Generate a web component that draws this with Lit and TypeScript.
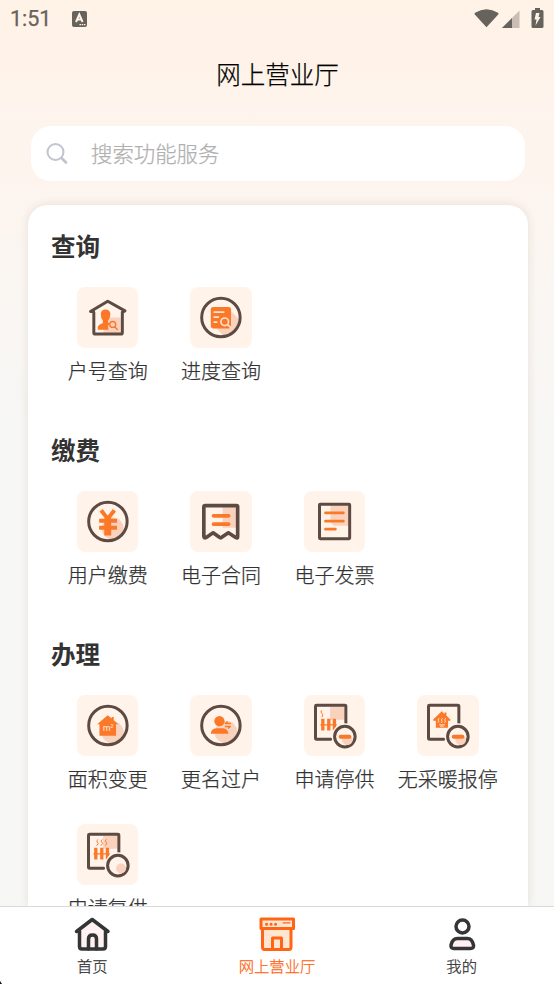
import { LitElement, html, css, svg } from "lit";
import { customElement, property } from "lit/decorators.js";

const ring = svg`<circle class="line" cx="92.5" cy="92" r="58"/>`;
const glow = svg`<circle class="shade" cx="107" cy="113" r="33"/>`;
const sheet = svg`<path class="line" d="M125.500 88V34Q125.500 31 122 31H37Q34 31 34 34V130Q34 133.500 37 133.500H80"/>`;
const badge = svg`<circle class="paper" cx="122.500" cy="125.500" r="40"/><circle class="line" cx="122.500" cy="125.500" r="31"/>`;
const minus = svg`<path class="hot" stroke-width="12" d="M110 126H136"/>`;
const radiator = svg`<path class="hot square" stroke-width="10" d="M56 72V107M74 72V107M91 72V107"/><path class="hot" stroke-width="4" d="M50 90H97"/>`;

const glyphs: Record<string, unknown> = {
  account: svg`<path class="shade" d="M79 92H131V139H79Z"/>
    <path class="line" d="M49 74H40L92 43L144 72L136 76V138Q136 142 132 142H54Q50 142 50 138V77"/>
    <path class="fill" d="M62 129V121Q63 114 77 109V101Q71 94 71 82Q72 68 85 68Q99 68 100 82Q99 95 93 101V108L98 110Q89 119 95 129Z"/>
    <circle class="hot" stroke-width="4" cx="107" cy="113" r="9"/><path class="hot" stroke-width="4" d="M113 120L121 128"/>`,
  progress: svg`<path class="shade" d="M122 72L147 97Q142 140 99 146L78 124Z"/>${ring}
    <rect class="fill" x="62" y="60" width="61" height="65" rx="7"/>
    <path class="pale" d="M72 76H101M72 91H85M72 106H80"/>
    <circle class="pale fillhot" cx="104" cy="105" r="11.500"/><path class="pale" d="M113 114L121 121"/>`,
  pay: svg`${glow}${ring}<path class="hot square" stroke-width="12" d="M72 58L92 84L112 58"/>
    <path class="hot square" stroke-width="12" d="M66 90H120M66 111H120"/><path class="hot square" stroke-width="21" d="M92 82V134"/>`,
  contract: svg`<path class="shade" d="M98 46H140V111H98Z"/>
    <path class="line heavy" d="M41 136V48Q41 44 46 44H139Q143 44 143 48V138Q143 144 137 140L115 126L96 139Q92 143 87 139L69 126L48 140Q41 144 41 136Z"/>
    <path class="hot" stroke-width="11" d="M70 75H116M70 100H116"/>`,
  invoice: svg`<path class="shade" d="M79 43H135V105H90L79 94Z"/><rect class="line" x="46" y="40" width="91" height="104" rx="2"/>
    <path class="hot" stroke-width="8" d="M64 66H118M64 91H118M64 115H94"/>`,
  area: svg`${glow}${ring}<path class="fill" d="M60 88L92 61L104 71V66H110V76L124 88H117V123H67V88Z"/>
    <text class="unit" x="77" y="109">m²</text>`,
  rename: svg`<circle class="shade" cx="108" cy="112" r="34"/>${ring}<circle class="fill" cx="88" cy="79" r="15.500"/>
    <path class="fill" d="M62 117Q62 102 79 100H98Q115 102 115 117Z"/>
    <path class="hot" stroke-width="4" d="M106 86H121M112 81L106 86M106 95H121L115 100"/>`,
  stop: svg`<path class="shade" d="M78 35H121V75H78Z"/>${sheet}${radiator}
    <path class="hot" stroke-width="3" d="M52 47Q47 52 53 55T54 66"/>${badge}<circle class="shade" cx="130" cy="135" r="16"/>${minus}`,
  noheat: svg`${sheet}<path class="fill" d="M48 74L74 49L82 57V53H88V62L100 74V78H93V99H56V78H48Z"/>
    <path class="pale thin" d="M65 71Q61 76 64 78T63 83M75 71Q71 76 74 78T73 83M85 71Q81 76 84 78T83 83M67 90H82M70 94H79"/>
    ${badge}<circle class="shade" cx="131" cy="135" r="16"/>${minus}`,
  restore: svg`<path class="shade" d="M78 35H121V75H78Z"/>${sheet}${radiator}
    <path class="hot" stroke-width="3" d="M62 47Q55 51 61 55T59 65M75 47Q68 51 74 55T72 65M88 47Q81 51 87 55T85 65"/>
    ${badge}<circle class="shade" cx="132" cy="134" r="15"/>`,
};

@customElement("service-tile")
export class ServiceTile extends LitElement {
  @property() icon = "";
  @property() label = "";
  static styles = css`
    :host { display: flex; flex-direction: column; align-items: center; height: 129px; }
    svg { width: 61.500px; height: 61px; border-radius: 8px; background: #fff3ea; flex: none; }
    .label { font-size: 20px; line-height: 30px; margin-top: 8px; white-space: nowrap; color: #333; }
    .line { fill: none; stroke: #5d4a42; stroke-width: 9; stroke-linejoin: round; stroke-linecap: round; }
    .heavy { stroke-width: 11; }
    .paper { fill: #fff3ea; }
    .shade { fill: #f8d2bd; }
    .fill { fill: #fb7829; }
    .hot { fill: none; stroke: #fb7829; stroke-linecap: round; stroke-linejoin: round; }
    .square { stroke-linecap: butt; stroke-linejoin: miter; }
    .pale { fill: none; stroke: #ffe3d0; stroke-width: 5; stroke-linecap: round; }
    .thin { stroke-width: 3; }
    .fillhot { fill: #fb7829; }
    .unit { font: 500 25px "Noto Sans", sans-serif; fill: #ffe3d0; -webkit-text-stroke: 0; }
  `;
  render() {
    return html`<svg viewBox="0 0 184 184">${glyphs[this.icon]}</svg><div class="label">${this.label}</div>`;
  }
}

const sections = [
  { title: "查询", items: [["account", "户号查询"], ["progress", "进度查询"]] },
  { title: "缴费", items: [["pay", "用户缴费"], ["contract", "电子合同"], ["invoice", "电子发票"]] },
  { title: "办理", items: [["area", "面积变更"], ["rename", "更名过户"], ["stop", "申请停供"], ["noheat", "无采暖报停"], ["restore", "申请复供"]] },
];

@customElement("app-root")
export class AppRoot extends LitElement {
  static styles = css`
    * { box-sizing: border-box; }
    :host {
      display: flex; flex-direction: column; height: 984px; width: 554px; overflow: hidden; position: relative;
      font-family: "Noto Sans CJK SC", sans-serif; font-weight: 300; -webkit-text-stroke: .25px currentColor; color: #333;
      background: linear-gradient(180deg, #fff2e7 0, #fff3e9 70px, #fef4ee 120px, #fdf4ee 180px, #fbf6f2 260px, #f7f7f5 430px);
    }
    .status { display: flex; height: 38px; flex: none; align-items: center; padding: 0 9px 0 10px; color: #66625c; font: 400 21.500px/38px Roboto, sans-serif; }
    .time { width: 62px; }
    .status svg { display: block; fill: #66625c; }
    .grow { flex: 1; }
    .title { flex: none; height: 74px; text-align: center; font-size: 24.500px; line-height: 72px; padding-left: 1px; color: #000; }
    .search { flex: none; margin: 14px 29px 0 31px; height: 55px; border-radius: 20px; background: #fff; display: flex; align-items: center; padding-left: 15px; gap: 22px; font-size: 21.400px; line-height: 32px; color: #b0b0b0; }
    .search span { margin-top: -1px; }
    .card { flex: 1; min-height: 0; overflow: hidden; margin: 24px 26px 0 28px; padding: 0 23px; background: #fff; border-radius: 20px 20px 0 0; box-shadow: 0 0 10px rgba(110, 80, 50, .14); }
    .section .head { -webkit-text-stroke: 0; font-weight: 700; font-size: 24.500px; height: 75px; line-height: 36px; padding-top: 23px; margin-bottom: 7px; }
    .grid { display: grid; grid-template-columns: repeat(4, 113.400px); margin-bottom: -7px; }
    .nav { flex: none; height: 78px; border-top: 1px solid #d9d9d9; background: #fff; display: grid; grid-template-columns: repeat(3, 1fr); position: relative; }
    .tab { display: flex; flex-direction: column; align-items: center; padding-top: 7px; font-size: 15.300px; line-height: 22px; }
    .tab svg { width: 40px; height: 40px; fill: none; stroke: #333536; stroke-width: 3.500; stroke-linecap: round; stroke-linejoin: round; }
    .active { color: #ff6515; -webkit-text-stroke-color: #ff6515; }
    .tab.active svg { stroke: #ff6515; stroke-width: 3; }
    .search { -webkit-text-stroke-color: #b0b0b0; }
    .title { -webkit-text-stroke-color: #000; }
    .corner { position: absolute; left: 0; bottom: 0; width: 2px; height: 3px; background: #111; clip-path: polygon(0 0, 100% 100%, 0 100%); }
  `;
  render() {
    return html`
      <div class="status">
        <span class="time">1:51</span>
        <svg width="15" height="17" viewBox="0 0 15 17"><rect width="15" height="16" rx="2"/><path d="M4 11L7.300 3.500L10.600 11M5.200 8.500H9.400" fill="none" stroke="#fff3e8" stroke-width="2"/><path d="M7.500 13.700H13.500" stroke="#fff3e8" stroke-width="1.200" stroke-dasharray="1.500 .7"/></svg>
        <span class="grow"></span>
        <svg width="79" height="24" viewBox="0 0 79 24">
          <path d="M9 6Q20.500-1 32 6Q33 7 32 8L20.500 20.500L9 8Q8 7 9 6Z" transform="translate(0 -.3)"/>
          <path d="M53.500 3.500V21H36Z" opacity=".36"/><path d="M46 11V21H36Z"/>
          <path d="M69 3V1H74V3H76Q77.500 3 77.500 4.500V19.500Q77.500 21 76 21H67Q65.500 21 65.500 19.500V4.500Q65.500 3 67 3Z"/>
          <path fill="#fff3e8" d="M70 6H73.500L72.500 10H74.500L69.500 18.500L70.500 12.500H68.500Z"/>
        </svg>
      </div>
      <div class="title">网上营业厅</div>
      <div class="search">
        <svg width="23" height="23" viewBox="0 0 23 23" fill="none" stroke="#bfc4d0" stroke-linecap="round"><circle cx="9.500" cy="10" r="8" stroke-width="2"/><path d="M15.500 16L20 20.500" stroke-width="2.700"/></svg>
        <span>搜索功能服务</span>
      </div>
      <main class="card">
        ${sections.map((s) => html`<section class="section"><div class="head">${s.title}</div>
          <div class="grid">${s.items.map(([icon, label]) => html`<service-tile icon=${icon} label=${label}></service-tile>`)}</div></section>`)}
      </main>
      <nav class="nav">
        <div class="tab">
          <svg viewBox="0 0 40 40"><path fill="#fff1f0" d="M7.500 17V32.500Q7.500 35 10 35H31Q33.500 35 33.500 32.500V17M4.500 17.500L20.200 5.500L36 17.500"/><path d="M16.500 35V25Q16.500 21 20.500 21T24.500 25V35"/></svg>首页
        </div>
        <div class="tab active">
          <svg viewBox="0 0 40 40"><path fill="#ffe6d1" d="M5.500 14.500V33Q5.500 35.500 7.500 35.500H32Q34 35.500 34 33V14.500"/><path fill="#ffe6d1" d="M4 5H36.500V14.500H4Z"/><path d="M15.500 35V24H24.500V35"/><path d="M9.500 10.200H9.600M14 10.200H14.100M18.500 10.200H18.600"/><path stroke-width="1.300" d="M26 8.800H33"/></svg>网上营业厅
        </div>
        <div class="tab">
          <svg viewBox="0 0 40 40"><circle cx="20.500" cy="12.500" r="6.500"/><path fill="#fff1f0" d="M15.500 24.500H25.500Q30 24.500 31.500 31Q32 34.500 28.500 34.500H12Q8.500 34.500 9 31Q10.500 24.500 15.500 24.500Z"/></svg>我的
        </div>
        <span class="corner"></span>
      </nav>
    `;
  }
}
